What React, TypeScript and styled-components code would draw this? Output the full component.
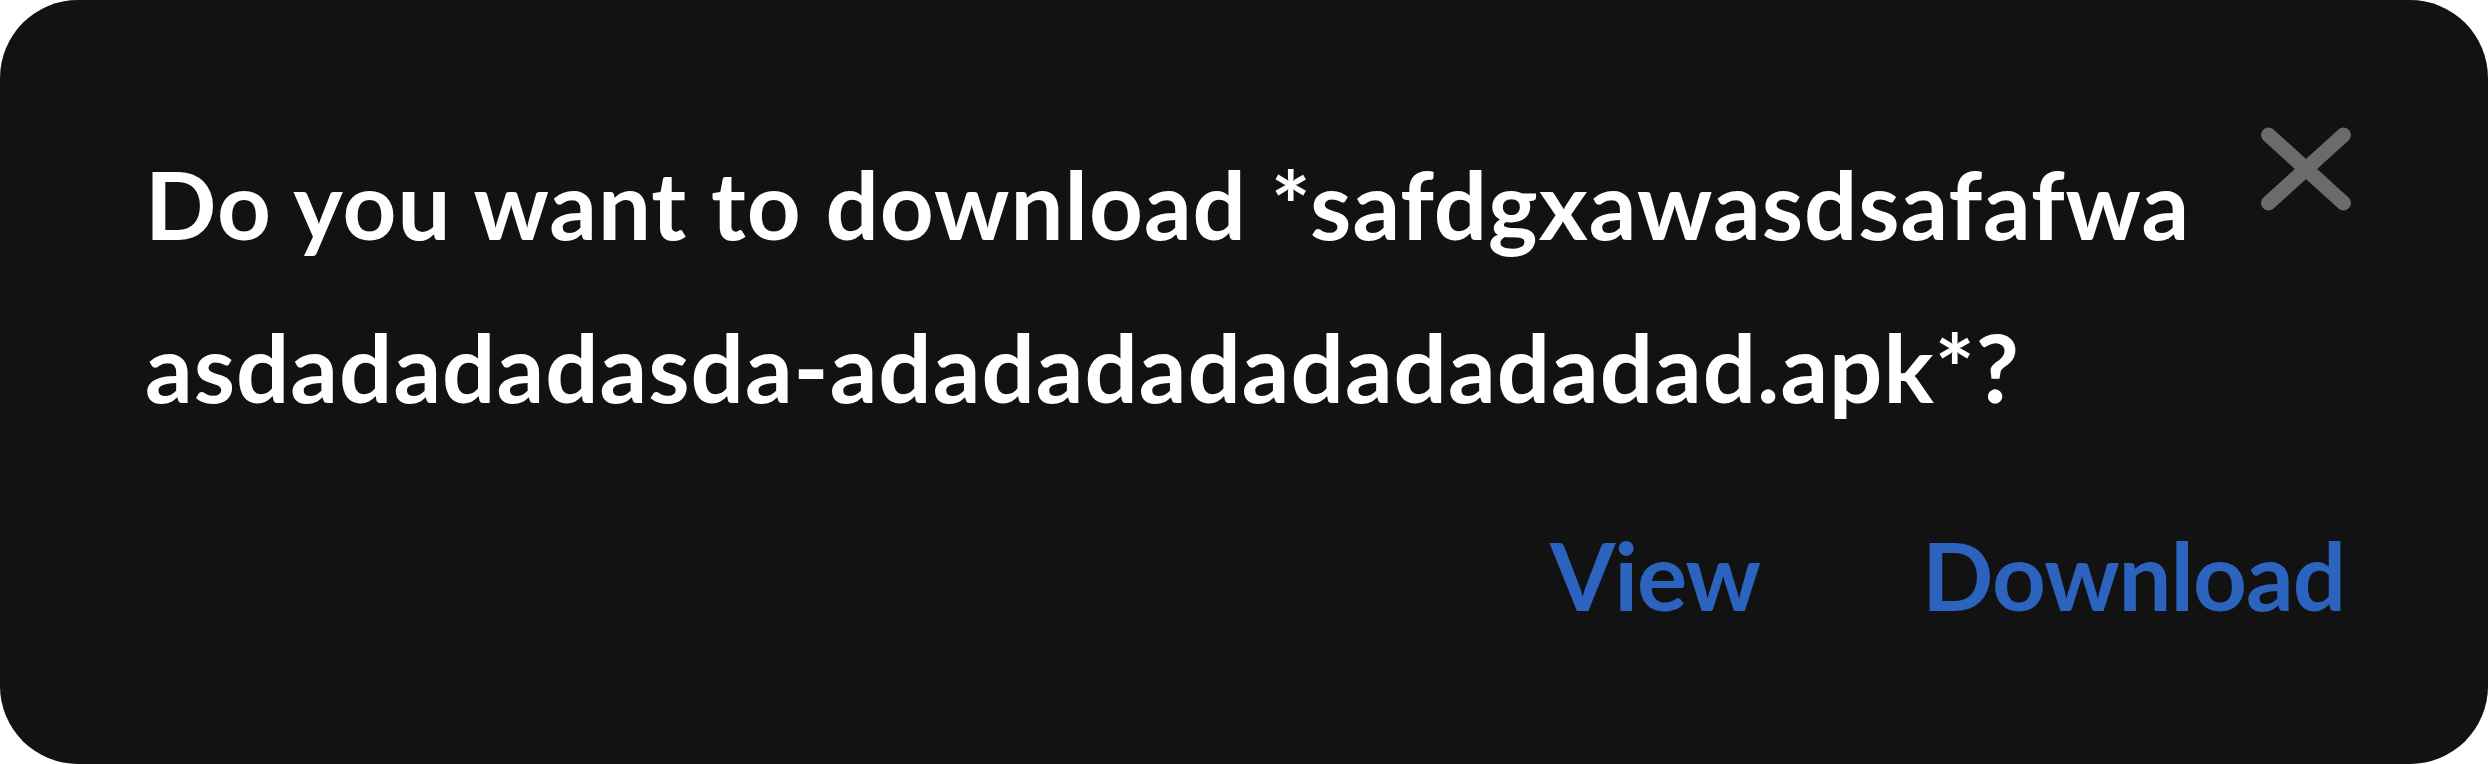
import React from "react";
import styled, { createGlobalStyle } from "styled-components";

const GlobalStyle = createGlobalStyle`
  html, body {
    margin: 0;
    padding: 0;
    background: #ffffff;
  }
  body {
    font-family: "Lato", "Noto Sans", sans-serif;
  }
  * { box-sizing: border-box; }
`;

const Card = styled.div`
  width: 2488px;
  height: 764px;
  background: #121212;
  border-radius: 78px;
  padding: 122px 143px 0 145px;
  display: flex;
  flex-direction: column;
  font-family: "Lato", "Noto Sans", sans-serif;
`;

const Header = styled.div`
  display: flex;
  align-items: flex-start;
`;

const Title = styled.h1`
  flex: 1;
  min-width: 0;
  margin: 0;
  font-size: 94px;
  font-weight: 700;
  line-height: 163px;
  letter-spacing: 1px;
  color: #ffffff;
  white-space: nowrap;
`;

const CloseButton = styled.button`
  width: 100px;
  height: 100px;
  margin: -3px -11px 0 0;
  padding: 0;
  border: none;
  background: transparent;
  display: flex;
  align-items: center;
  justify-content: center;
  cursor: pointer;
  flex-shrink: 0;
`;

const Actions = styled.div`
  display: flex;
  justify-content: flex-end;
  align-items: center;
  gap: 162px;
  margin-top: 63px;
`;

const ActionButton = styled.button`
  padding: 0;
  border: none;
  background: transparent;
  font-family: "Lato", "Noto Sans", sans-serif;
  font-size: 94px;
  font-weight: 700;
  line-height: 128px;
  letter-spacing: -1px;
  color: #2b63be;
  cursor: pointer;
`;

export default function App() {
  return (
    <>
      <GlobalStyle />
      <Card>
        <Header>
          <Title>
            Do you want to download *safdgxawasdsafafwa
            <br />
            asdadadadasda-adadadadadadadadad.apk*?
          </Title>
          <CloseButton aria-label="Close">
            <svg width="100" height="100" viewBox="0 0 100 100">
              <g stroke="#6b6b6b" strokeWidth="15" strokeLinecap="round">
                <line x1="12.5" y1="16" x2="87.5" y2="84" />
                <line x1="87.5" y1="16" x2="12.5" y2="84" />
              </g>
            </svg>
          </CloseButton>
        </Header>
        <Actions>
          <ActionButton>View</ActionButton>
          <ActionButton>Download</ActionButton>
        </Actions>
      </Card>
    </>
  );
}
